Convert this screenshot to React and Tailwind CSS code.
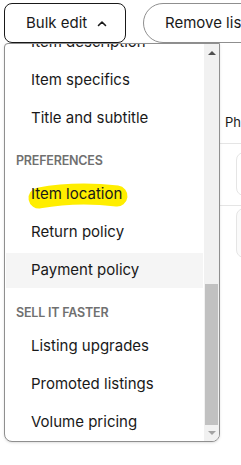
import React from 'react';

const items = [
    { type: 'item', label: 'Item description' },
    { type: 'item', label: 'Item specifics' },
    { type: 'item', label: 'Title and subtitle' },
    { type: 'header', label: 'PREFERENCES' },
    { type: 'item', label: 'Item location', marked: true },
    { type: 'item', label: 'Return policy' },
    { type: 'item', label: 'Payment policy', hover: true },
    { type: 'header', label: 'SELL IT FASTER' },
    { type: 'item', label: 'Listing upgrades' },
    { type: 'item', label: 'Promoted listings' },
    { type: 'item', label: 'Volume pricing' },
];

const MenuRow = ({ row }) => {
    if (row.type === 'header') {
        return (
            <div className="h-[38px] pt-[17px] pl-[11px] text-[12.5px] leading-[14px] font-semibold text-[#707070] tracking-[-0.2px]">
                {row.label}
            </div>
        );
    }
    return (
        <div className="py-[1.5px]">
            <div className={`relative h-[35px] mx-[1px] flex items-center pl-[25px] text-[15px] text-[#191919] ${row.hover ? 'bg-[#f5f5f5]' : ''}`}>
                {row.marked && (
                    // highlighter stroke drawn over the row, under the text
                    <svg className="absolute left-[20px] top-[-2px]" width="104" height="40" viewBox="0 0 104 40">
                        <path d="M13 23 C35 19, 65 18, 91 21" stroke="#ffee00" strokeWidth="21" strokeLinecap="round" fill="none" />
                    </svg>
                )}
                <span className="relative">{row.label}</span>
            </div>
        </div>
    );
};

const App = () => {
    return (
        <div className="relative w-[241px] h-[465px] overflow-hidden bg-white font-['Inter',sans-serif]">
            {/* toolbar */}
            <div className="flex gap-[17px] pl-[4px] pt-[3px]">
                <button className="shrink-0 w-[122px] h-[40px] border border-[#191919] rounded-[8px] flex items-center pl-[21px] gap-[10px] text-[15px] text-[#191919]">
                    <span>Bulk edit</span>
                    <svg width="10" height="7" viewBox="0 0 10 7">
                        <path d="M1.5 5.5 L5 2 L8.5 5.5" stroke="#191919" strokeWidth="1.6" fill="none" strokeLinecap="round" strokeLinejoin="round" />
                    </svg>
                </button>
                <button className="shrink-0 h-[40px] border border-[#8f8f8f] rounded-full pl-[21px] pr-[20px] text-[15px] text-[#191919] whitespace-nowrap">
                    Remove listings
                </button>
            </div>

            {/* table behind the menu */}
            <div className="pl-[220px] mt-[58px]">
                <div className="h-[43px] border-b border-[#e5e5e5] pl-[5px] text-[13px] text-[#191919] leading-[42px]">Photo</div>
                <div className="h-[62px] border-b border-[#e5e5e5] pl-[16px] pt-[8px]">
                    <div className="w-[50px] h-[44px] border border-[#e5e5e5] rounded-[8px]" />
                </div>
                <div className="h-[62px] pl-[16px] pt-[2px]">
                    <div className="w-[50px] h-[50px] border border-[#e5e5e5] rounded-[8px] bg-[#fafafa]" />
                </div>
            </div>

            {/* open bulk edit menu */}
            <div className="absolute left-[4px] top-[43px] w-[216px] h-[399px] border border-[#8f8f8f] rounded-b-[8px] rounded-tl-[4px] bg-white flex overflow-hidden shadow-sm">
                <div className="flex-1 overflow-hidden">
                    <div className="-mt-[21px]">
                        {items.map((row) => (
                            <MenuRow key={row.label} row={row} />
                        ))}
                    </div>
                </div>
                <div className="w-[15px] bg-[#f1f1f1] flex flex-col">
                    <div className="h-[17px] flex items-center justify-center">
                        <div className="w-0 h-0 border-x-[4px] border-x-transparent border-b-[4px] border-b-[#505050]" />
                    </div>
                    <div className="flex-1 pt-[223px] pl-[1px]">
                        <div className="w-[13px] h-[141px] bg-[#c1c1c1]" />
                    </div>
                    <div className="h-[16px] flex items-center justify-center">
                        <div className="w-0 h-0 border-x-[4px] border-x-transparent border-t-[4px] border-t-[#a3a3a3]" />
                    </div>
                </div>
            </div>
        </div>
    );
};

export default App;
